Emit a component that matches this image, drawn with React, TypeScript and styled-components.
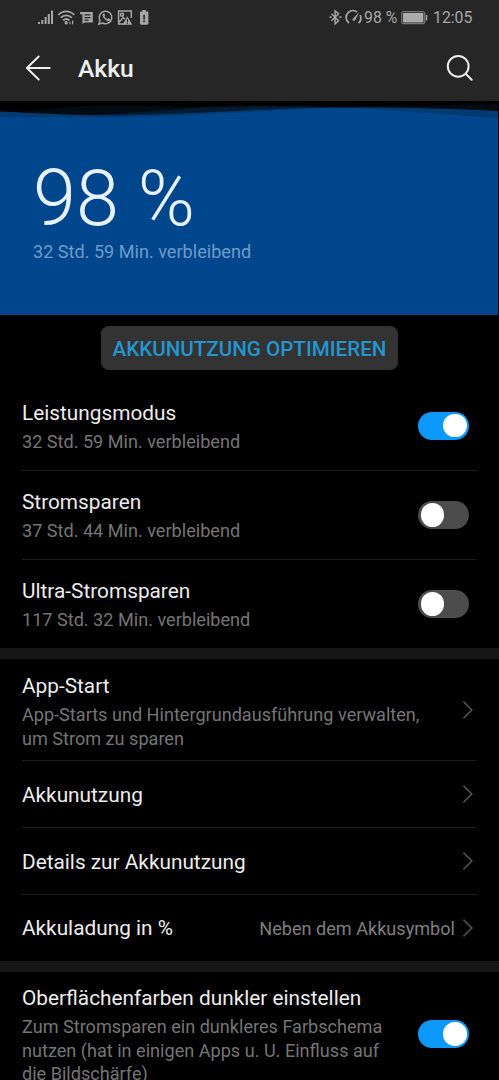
import React from "react";
import styled, { createGlobalStyle } from "styled-components";

const GlobalStyle = createGlobalStyle`
  * { box-sizing: border-box; }
  body {
    margin: 0;
    background: #000;
    overflow: hidden;
    font-family: Roboto, "Liberation Sans", sans-serif;
  }
`;

const Screen = styled.main`
  width: 499px;
  height: 1080px;
  overflow: hidden;
  display: flex;
  flex-direction: column;
  background: #000;
  color: #ededed;
  > * { flex-shrink: 0; }
`;

const StatusBar = styled.div`
  height: 36px;
  padding: 0 28px 0 38px;
  display: flex;
  align-items: center;
  justify-content: space-between;
  background: #262626;
  color: #a6a6a6;
  font-size: 15.8px;
  line-height: 36px;
`;

const StatusGroup = styled.div`
  display: flex;
  align-items: center;
  svg { display: block; }
`;

const StatusText = styled.span<{ $left?: number; $width: number }>`
  margin-left: ${(p) => p.$left ?? 0}px;
  width: ${(p) => p.$width}px;
  white-space: nowrap;
`;

const AppBar = styled.header`
  height: 65px;
  padding: 0 24px 2px 25px;
  display: flex;
  align-items: center;
  background: #262626;
  svg { display: block; }
`;

const PageTitle = styled.h1`
  margin: 3px 0 0 26px;
  flex: 1;
  font-size: 24.7px;
  font-weight: 500;
  line-height: 30px;
`;

const Hero = styled.section`
  height: 214px;
  width: 498px;
  display: flex;
  flex-direction: column;
  background: #00468c;
`;

const Wave = styled.svg`
  display: block;
  width: 498px;
  height: 24px;
  flex-shrink: 0;
`;

const Percentage = styled.div`
  margin: 34px 0 0 33px;
  font-size: 77.4px;
  font-weight: 300;
  line-height: 80px;
  color: #e8f2fd;
  white-space: nowrap;
`;

const Remaining = styled.div`
  margin: 1px 0 0 33px;
  font-size: 18.1px;
  line-height: 24px;
  color: #6e9bcb;
`;

const ButtonArea = styled.div`
  height: 66px;
  padding-top: 11px;
  display: flex;
  justify-content: center;
`;

const OptimizeButton = styled.button`
  width: 297px;
  height: 44px;
  padding: 2px 0 0;
  border: 0;
  border-radius: 8px;
  background: #333;
  color: #2496cf;
  font: 500 20.6px/24px Roboto, sans-serif;
  white-space: nowrap;
`;

const Group = styled.section`
  padding: 0 22px;
`;

const Gap = styled.div`
  height: 11px;
  background: #161616;
`;

const Row = styled.div<{ $height: number; $divided?: boolean; $right?: number }>`
  height: ${(p) => p.$height}px;
  padding-right: ${(p) => p.$right ?? 0}px;
  display: flex;
  align-items: center;
  border-top: ${(p) => (p.$divided ? "1px solid #1c1c1c" : "0")};
  svg { display: block; flex-shrink: 0; }
`;

const Labels = styled.div<{ $top?: number }>`
  flex: 1;
  min-width: 0;
  padding-top: ${(p) => p.$top ?? 0}px;
`;

const Label = styled.div`
  font-size: 20.8px;
  line-height: 28px;
  white-space: nowrap;
`;

const Detail = styled.div`
  margin-top: 3px;
  font-size: 18.1px;
  line-height: 23.6px;
  color: #757575;
  white-space: nowrap;
`;

const Value = styled.span`
  margin: 1px 7px 0 0;
  font-size: 18.1px;
  line-height: 24px;
  color: #7f7f7f;
`;

const Track = styled.div<{ $on?: boolean }>`
  width: 51px;
  height: 28px;
  padding: 0 2.5px;
  display: flex;
  align-items: center;
  justify-content: ${(p) => (p.$on ? "flex-end" : "flex-start")};
  border-radius: 14px;
  background: ${(p) => (p.$on ? "#0d99fb" : "#4c4c4c")};
`;

const Knob = styled.div`
  width: 23.5px;
  height: 23.5px;
  border-radius: 50%;
  background: #fff;
`;

const Toggle = ({ on }: { on?: boolean }) => (
  <Track $on={on} role="switch" aria-checked={!!on}>
    <Knob />
  </Track>
);

const Chevron = () => (
  <svg width="12" height="20" viewBox="0 0 12 20" fill="none" stroke="#555" strokeWidth="1.6">
    <path d="M1.5 1.8 9.8 10 1.5 18.2" />
  </svg>
);

const StatusIcons = () => (
  <svg width="114" height="20" viewBox="38 8 114 20" fill="#a6a6a6">
    <path d="M38 22h2v2h-2zM41.3 20h2v4h-2zM44.6 17h2v7h-2zM47.8 14h2v10h-2zM51 10.5h2v13.500h-2z" />
    <g fill="none" stroke="#a6a6a6" strokeWidth="1.8">
      <path d="M58.300 14.800c4.600-4.700 11.400-4.700 16 0M60.700 17.700c3.300-3.200 7.900-3.200 11.200 0M63.200 20.500c1.900-1.800 4.300-1.800 6.200 0" />
    </g>
    <circle cx="66.200" cy="22.700" r="1.700" />
    <path d="M69.400 24.200v-2.400h1.200v2.400zM72 20.500h1.200v3.700H72z" />
    <path fillRule="evenodd" d="M80 12h12.800v10.500H84.500L82.400 24v-9.700H80zM84.500 14.300v1.300h6v-1.300zM84.500 16.900v1.300h6v-1.300zM84.500 19.400v1.300h4v-1.300z" />
    <g fill="none" stroke="#a6a6a6" strokeWidth="1.5">
      <path d="m98.900 24.100 1.100-3.600a6.300 6.300 0 1 1 2.500 2.500z" />
      <path d="M124.500 23.900H118.600V11.100H131.300V18M118.800 22.400l4.500-4.800 1.700 1.600" />
      <circle cx="122" cy="14.700" r="1.500" />
    </g>
    <path d="M103.300 13.800c.8-.6 1.400-.2 1.800 1.500.2.700-.8 1-.5 1.500.6 1.100 1.500 1.900 2.600 2.300.5.200.8-1 1.400-.8 1.700.6 2 .9 1.500 1.800-1.100 1.700-3.500.8-5.500-1.200-2-1.900-2.700-4-1.300-5.100z" />
    <path fillRule="evenodd" d="m127.400 16.200 4.900 8.600h-9.800zM126.800 19v2.800h1.200V19zM126.800 22.600v1.200h1.200v-1.200z" />
    <path fillRule="evenodd" d="M142.300 10h3.600v1.600h1.400c.7 0 1.100.4 1.100 1.100v10.900c0 .7-.4 1.100-1.100 1.100h-6.200c-.7 0-1.100-.4-1.100-1.100V12.700c0-.7.4-1.100 1.100-1.100h1.200zM143.300 14.700v4.700h1.600v-4.700zM143.300 20.500v1.700h1.600v-1.700z" />
  </svg>
);

const ConnectionIcons = () => (
  <svg width="35" height="20" viewBox="329 8 35 20" fill="none" stroke="#a6a6a6" strokeWidth="1.500">
    <path d="m331.500 13.800 7.100 6.900-3.500 3.200V10.800l3.500 3.100-7.100 6.900" />
    <path d="M329.600 17.200h1.900M339.500 17.200h1.900" strokeWidth="1.700" />
    <path d="M349 23.200c-3.600-3.300-3.800-7.800-.8-10.600 2.700-2.500 6.500-2.500 9-.5M360.200 15c1.200 3 .6 6-1.600 8.200" strokeWidth="1.800" />
    <path d="m359.300 12-4.100 8.100c-.9 1.700-3.400.4-2.500-1.200z" fill="#a6a6a6" stroke="none" />
  </svg>
);

const BatteryIcon = () => (
  <svg width="27" height="14" viewBox="0 0 27 14">
    <rect x=".7" y=".7" width="23" height="12" rx="2" fill="none" stroke="#777" strokeWidth="1.2" />
    <rect x="2" y="2" width="20.400" height="9.400" rx=".7" fill="#ababab" />
    <path d="M25.500 4v5.500" stroke="#a6a6a6" strokeWidth="1.500" />
  </svg>
);

const BackIcon = () => (
  <svg width="27" height="28" viewBox="0 0 27 28" fill="none" stroke="#ededed" strokeWidth="1.900" strokeLinecap="round" strokeLinejoin="round">
    <path d="M13.700 2.500 1.900 14l11.800 11.500M2.200 14h22.500" />
  </svg>
);

const SearchIcon = () => (
  <svg width="30" height="30" viewBox="0 0 30 30" fill="none" stroke="#ededed" strokeWidth="2" strokeLinecap="round">
    <circle cx="13.200" cy="13.300" r="10.400" />
    <path d="m20.800 20.900 5.900 5.900" />
  </svg>
);

const modes = [
  { label: "Leistungsmodus", detail: "32 Std. 59 Min. verbleibend", on: true },
  { label: "Stromsparen", detail: "37 Std. 44 Min. verbleibend", on: false },
  { label: "Ultra-Stromsparen", detail: "117 Std. 32 Min. verbleibend", on: false },
];

export default function App() {
  return (
    <>
      <GlobalStyle />
      <Screen>
        <StatusBar>
          <StatusIcons />
          <StatusGroup>
            <ConnectionIcons />
            <StatusText $width={37}>98 %</StatusText>
            <BatteryIcon />
            <StatusText $left={5} $width={38}>12:05</StatusText>
          </StatusGroup>
        </StatusBar>
        <AppBar>
          <BackIcon />
          <PageTitle>Akku</PageTitle>
          <SearchIcon />
        </AppBar>
        <Hero>
          <Wave viewBox="0 0 498 24" preserveAspectRatio="none">
            <path fill="#000" d="M0 0H498V24H0z" />
            <path fill="#020a12" d="M0 12C45 10 65 4.500 110 4.500C170 4.500 210 7 260 7C360 7 420 4 498 3.500V24H0z" />
            <path fill="#031a33" d="M0 14H95C140 12 190 5 265 5C310 5 340 6.500 400 7V24H0z" />
            <path fill="#023a72" d="M0 10.500C35 12 65 14 98 14.300C180 14.500 260 7 340 6.500C400 6 450 7.500 498 10V24H0z" />
            <path fill="#00468c" d="M0 16C50 16.500 110 16.500 150 15.500C230 13 290 7.500 345 7C400 9 450 14 498 17V24H0z" />
          </Wave>
          <Percentage>98 %</Percentage>
          <Remaining>32 Std. 59 Min. verbleibend</Remaining>
        </Hero>
        <ButtonArea>
          <OptimizeButton>AKKUNUTZUNG OPTIMIEREN</OptimizeButton>
        </ButtonArea>
        <Group>
          {modes.map((mode, i) => (
            <Row key={mode.label} $height={89} $divided={i > 0} $right={8}>
              <Labels $top={i > 0 ? 0 : 2}>
                <Label>{mode.label}</Label>
                <Detail>{mode.detail}</Detail>
              </Labels>
              <Toggle on={mode.on} />
            </Row>
          ))}
        </Group>
        <Gap />
        <Group>
          <Row $height={101} $right={3}>
            <Labels $top={3}>
              <Label>App-Start</Label>
              <Detail>
                App-Starts und Hintergrundausführung verwalten,
                <br />
                um Strom zu sparen
              </Detail>
            </Labels>
            <Chevron />
          </Row>
          <Row $height={67} $divided $right={3}>
            <Labels $top={1}><Label>Akkunutzung</Label></Labels>
            <Chevron />
          </Row>
          <Row $height={67} $divided $right={3}>
            <Labels $top={1}><Label>Details zur Akkunutzung</Label></Labels>
            <Chevron />
          </Row>
          <Row $height={67} $divided $right={3}>
            <Labels><Label>Akkuladung in %</Label></Labels>
            <Value>Neben dem Akkusymbol</Value>
            <Chevron />
          </Row>
        </Group>
        <Gap />
        <Group>
          <Row $height={124} $right={8}>
            <Labels $top={2}>
              <Label>Oberflächenfarben dunkler einstellen</Label>
              <Detail>
                Zum Stromsparen ein dunkleres Farbschema
                <br />
                nutzen (hat in einigen Apps u. U. Einfluss auf
                <br />
                die Bildschärfe)
              </Detail>
            </Labels>
            <Toggle on />
          </Row>
        </Group>
      </Screen>
    </>
  );
}
